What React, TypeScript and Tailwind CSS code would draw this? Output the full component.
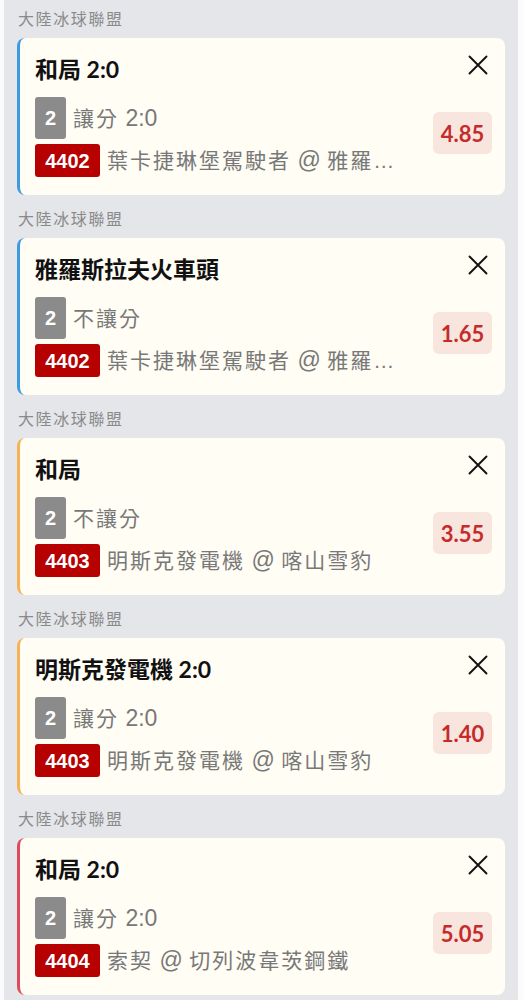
import React from 'react';

interface Bet {
  league: string;
  title: string;
  line: string;
  code: string;
  match: string;
  odds: string;
  accent: string;
}

const bets: Bet[] = [
  { league: '大陸冰球聯盟', title: '和局 2:0', line: '讓分 2:0', code: '4402', match: '葉卡捷琳堡駕駛者 @ 雅羅斯拉夫火車頭', odds: '4.85', accent: 'border-l-[#3d9be0]' },
  { league: '大陸冰球聯盟', title: '雅羅斯拉夫火車頭', line: '不讓分', code: '4402', match: '葉卡捷琳堡駕駛者 @ 雅羅斯拉夫火車頭', odds: '1.65', accent: 'border-l-[#3d9be0]' },
  { league: '大陸冰球聯盟', title: '和局', line: '不讓分', code: '4403', match: '明斯克發電機 @ 喀山雪豹', odds: '3.55', accent: 'border-l-[#f6b356]' },
  { league: '大陸冰球聯盟', title: '明斯克發電機 2:0', line: '讓分 2:0', code: '4403', match: '明斯克發電機 @ 喀山雪豹', odds: '1.40', accent: 'border-l-[#f6b356]' },
  { league: '大陸冰球聯盟', title: '和局 2:0', line: '讓分 2:0', code: '4404', match: '索契 @ 切列波韋茨鋼鐵', odds: '5.05', accent: 'border-l-[#dc4c5d]' },
];

// CJK runs are set a bit smaller with wider spacing, latin runs (2:0, @) stay larger
const MixedText: React.FC<{ text: string }> = ({ text }) => (
  <>
    {text.split(/([\u3000-\u9fff\uff00-\uffef]+)/).map((part, i) =>
      i % 2 === 1 ? (
        <span key={i} className="text-[21px] tracking-[2px]">
          {part}
        </span>
      ) : (
        <span key={i} className="text-[23px]">
          {part}
        </span>
      )
    )}
  </>
);

const CloseIcon = () => (
  <svg width="20" height="20" viewBox="0 0 20 20" fill="none">
    <path d="M1.5 1.5L18.5 18.5M18.5 1.5L1.5 18.5" stroke="#111" strokeWidth="1.9" strokeLinecap="round" />
  </svg>
);

const BetCard: React.FC<{ bet: Bet }> = ({ bet }) => (
  <div className="flex flex-col">
    {/* league label */}
    <div className="h-[38px] pt-[8px] pl-[1px] font-['Liberation_Sans','Noto_Sans_CJK_TC',sans-serif] text-[16px] leading-[24px] tracking-[1.6px] text-[#8a8a8a]">
      {bet.league}
    </div>

    {/* card */}
    <div className={`flex h-[157px] rounded-lg border-l-[3px] ${bet.accent} bg-[#fffdf4] pt-[17px] pb-[18px] pl-[15px] pr-[13px]`}>
      <div className="flex min-w-0 flex-1 flex-col">
        <div className="h-[28px] text-[23px] font-bold leading-[28px] text-[#111]">{bet.title}</div>
        <div className="mt-[14px] flex h-[42px] items-center gap-[7px] font-['Liberation_Sans','Noto_Sans_CJK_TC',sans-serif]">
          <span className="flex h-[42px] w-[31px] shrink-0 items-center justify-center rounded-[3px] bg-[#8b8b8b] text-[20px] font-bold text-white">
            2
          </span>
          <span className="text-[21px] leading-[28px] text-[#787878]">
            <MixedText text={bet.line} />
          </span>
        </div>
        <div className="mt-[5px] flex h-[33px] min-w-0 items-center gap-[7px] font-['Liberation_Sans','Noto_Sans_CJK_TC',sans-serif]">
          <span className="flex h-[33px] w-[65px] shrink-0 items-center justify-center rounded-[3px] bg-[#b70000] text-[20px] font-bold text-white">
            {bet.code}
          </span>
          <span className="min-w-0 truncate text-[21px] leading-[28px] text-[#787878]">
            <MixedText text={bet.match} />
          </span>
        </div>
      </div>

      <div className="ml-[30px] flex w-[59px] shrink-0 flex-col items-end">
        <div className="pr-[4px]">
          <CloseIcon />
        </div>
        <div className="mt-[37px] flex h-[42px] w-[59px] items-center justify-center rounded-md bg-[#f8e5de] text-[22px] font-bold text-[#c52b2a]">
          {bet.odds}
        </div>
      </div>
    </div>
  </div>
);

export default function App() {
  return (
    <div className="min-h-[1000px] w-full bg-[#fbfbfc] font-[Lato,'Noto_Sans_CJK_TC',sans-serif]">
      <div className="ml-[4px] mr-[5px] flex min-h-[1000px] flex-col gap-[5px] bg-[#e5e6ea] px-[13px]">
        {bets.map((bet, i) => (
          <BetCard key={i} bet={bet} />
        ))}
      </div>
    </div>
  );
}
